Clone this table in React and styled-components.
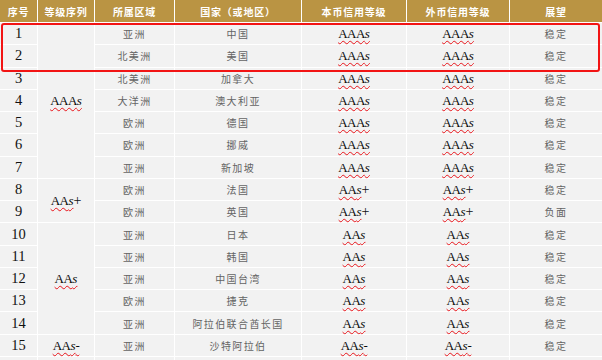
import React from "react";
import styled, { createGlobalStyle } from "styled-components";

const GlobalStyle = createGlobalStyle`
  html, body { margin: 0; padding: 0; background: #fff; }
  body { width: 602px; height: 360px; overflow: hidden; }
`;

const cjk = `"Noto Sans CJK SC", "Noto Sans", sans-serif`;
const serif = `"Liberation Serif", "Times New Roman", serif`;

const headers = ["序号", "等级序列", "所属区域", "国家（或地区）", "本币信用等级", "外币信用等级", "展望"];

const rows = [
  ["1", "亚洲", "中国", "AAA", "", "AAA", "", "稳定"],
  ["2", "北美洲", "美国", "AAA", "", "AAA", "", "稳定"],
  ["3", "北美洲", "加拿大", "AAA", "", "AAA", "", "稳定"],
  ["4", "大洋洲", "澳大利亚", "AAA", "", "AAA", "", "稳定"],
  ["5", "欧洲", "德国", "AAA", "", "AAA", "", "稳定"],
  ["6", "欧洲", "挪威", "AAA", "", "AAA", "", "稳定"],
  ["7", "亚洲", "新加坡", "AAA", "", "AAA", "", "稳定"],
  ["8", "欧洲", "法国", "AA", "+", "AA", "+", "稳定"],
  ["9", "欧洲", "英国", "AA", "+", "AA", "+", "负面"],
  ["10", "亚洲", "日本", "AA", "", "AA", "", "稳定"],
  ["11", "亚洲", "韩国", "AA", "", "AA", "", "稳定"],
  ["12", "亚洲", "中国台湾", "AA", "", "AA", "", "稳定"],
  ["13", "欧洲", "捷克", "AA", "", "AA", "", "稳定"],
  ["14", "亚洲", "阿拉伯联合酋长国", "AA", "", "AA", "", "稳定"],
  ["15", "亚洲", "沙特阿拉伯", "AA", "-", "AA", "-", "稳定"],
];

// merged cells of the 等级序列 column
const groups = [
  { start: 2, span: 7, base: "AAA", tail: "" },
  { start: 9, span: 2, base: "AA", tail: "+" },
  { start: 11, span: 5, base: "AA", tail: "" },
  { start: 16, span: 1, base: "AA", tail: "-" },
  { start: 17, span: 1, base: "", tail: "" },
];

const Page = styled.div`
  position: relative;
  width: 602px;
  height: 360px;
  overflow: hidden;
`;

const Grid = styled.div`
  display: grid;
  grid-template-columns: 37px 56px 79px 126px 104px 102px 92px;
  grid-template-rows: 22px repeat(16, 21.27px);
  gap: 1px;
  background: #fff;
`;

const Head = styled.div`
  background: #ba9443;
  color: #fff;
  font-family: ${cjk};
  font-weight: 700;
  font-size: 10px;
  letter-spacing: 0.8px;
  display: flex;
  align-items: center;
  justify-content: center;
  white-space: nowrap;
`;

const Cell = styled.div`
  background: #f2f2f2;
  display: flex;
  align-items: center;
  justify-content: center;
  white-space: nowrap;
  grid-column: ${(p) => p.$col};
  grid-row: ${(p) => p.$row};
  font-family: ${(p) => (p.$text ? cjk : serif)};
  font-size: ${(p) => (p.$text ? "10px" : "14.5px")};
  letter-spacing: ${(p) => (p.$text ? "1.4px" : "0")};
  color: ${(p) => (p.$text ? "#646464" : "#111")};
`;

const Rating = styled.span`
  font-family: ${serif};
  font-size: 13px;
  color: #0a0a0a;
  letter-spacing: -0.5px;
  text-decoration: underline wavy #e8141a;
  text-decoration-thickness: 1px;
  text-underline-offset: 1.5px;
  i { font-style: italic; letter-spacing: 0; }
`;

const Tail = styled.span`
  font-family: ${serif};
  font-size: 14px;
  color: #111;
`;

const Highlight = styled.div`
  position: absolute;
  left: 1px;
  top: 23px;
  width: 599px;
  height: 49px;
  box-sizing: border-box;
  border: 2.5px solid #f21414;
  border-radius: 3px;
  pointer-events: none;
`;

function Grade({ base, tail }) {
  if (!base) return null;
  const under = tail === "-";
  return (
    <span>
      <Rating>
        {base}
        <i>s</i>
        {under ? "-" : ""}
      </Rating>
      {!under && tail ? <Tail>{tail}</Tail> : null}
    </span>
  );
}

export default function App() {
  return (
    <Page>
      <GlobalStyle />
      <Grid>
        {headers.map((h) => (
          <Head key={h}>{h}</Head>
        ))}
        {groups.map((g) => (
          <Cell key={"g" + g.start} $col={2} $row={`${g.start} / span ${g.span}`}>
            <Grade base={g.base} tail={g.tail} />
          </Cell>
        ))}
        {rows.map((r, i) => {
          const row = i + 2;
          return (
            <React.Fragment key={r[0]}>
              <Cell $col={1} $row={row}>{r[0]}</Cell>
              <Cell $col={3} $row={row} $text>{r[1]}</Cell>
              <Cell $col={4} $row={row} $text>{r[2]}</Cell>
              <Cell $col={5} $row={row}><Grade base={r[3]} tail={r[4]} /></Cell>
              <Cell $col={6} $row={row}><Grade base={r[5]} tail={r[6]} /></Cell>
              <Cell $col={7} $row={row} $text>{r[7]}</Cell>
            </React.Fragment>
          );
        })}
        {[1, 3, 4, 5, 6, 7].map((c) => (
          <Cell key={"e" + c} $col={c} $row={17} />
        ))}
      </Grid>
      <Highlight />
    </Page>
  );
}
